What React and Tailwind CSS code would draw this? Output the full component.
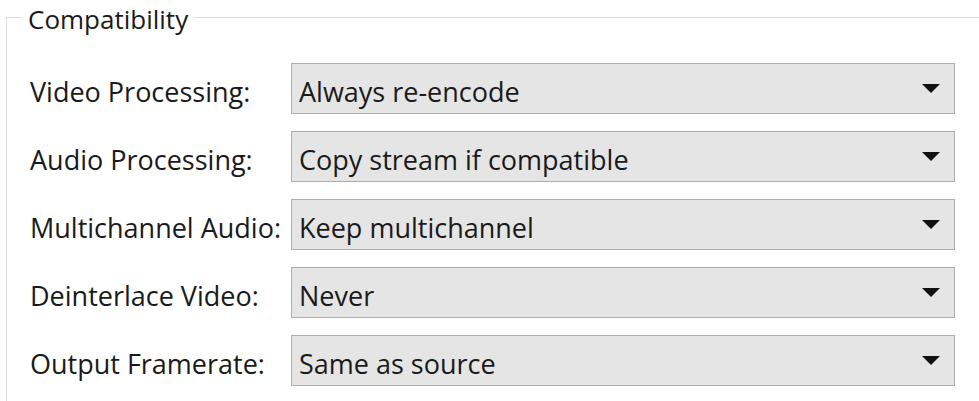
const rows = [
  ["Video Processing:", "Always re-encode"],
  ["Audio Processing:", "Copy stream if compatible"],
  ["Multichannel Audio:", "Keep multichannel"],
  ["Deinterlace Video:", "Never"],
  ["Output Framerate:", "Same as source"],
];

function Arrow() {
  return (
    <svg width="20" height="11" viewBox="0 0 20 11" className="shrink-0">
      <path d="M1 1 L19 1 L10 10 Z" fill="#111" />
    </svg>
  );
}

export default function App() {
  return (
    <div
      className="w-[979px] h-[401px] overflow-hidden bg-white text-[#1a1a1a]"
      style={{ fontFamily: '"Open Sans", "Noto Sans", sans-serif' }}
    >
      {/* Group box */}
      <fieldset className="ml-[6px] mt-[2px] border-t border-l border-[#dcdcdc] pb-[30px]">
        <legend className="ml-[15px] px-[6px] pt-[3px] text-[26px] leading-[28px]">Compatibility</legend>
        <div className="flex flex-col gap-[17px] pl-[23px] pt-[30px]">
          {rows.map(([label, value]) => (
            <div key={label} className="flex items-center">
              <div className="w-[261px] text-[27px] leading-[28px] pt-[6px]">{label}</div>
              <div className="w-[664px] h-[51px] flex items-center justify-between bg-[#e5e5e5] border border-[#adadad] pl-[7px] pr-[13px]">
                <span className="text-[27px] leading-[28px] pt-[6px]">{value}</span>
                <Arrow />
              </div>
            </div>
          ))}
        </div>
      </fieldset>
    </div>
  );
}
